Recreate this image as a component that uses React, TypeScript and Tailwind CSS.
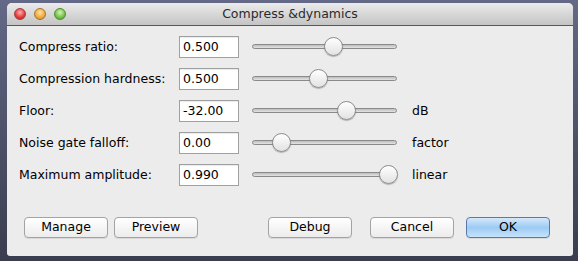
import React from "react";

const rows = [
  { label: "Compress ratio:", value: "0.500", pos: 333, unit: "" },
  { label: "Compression hardness:", value: "0.500", pos: 318, unit: "" },
  { label: "Floor:", value: "-32.00", pos: 346, unit: "dB" },
  { label: "Noise gate falloff:", value: "0.00", pos: 281, unit: "factor" },
  { label: "Maximum amplitude:", value: "0.990", pos: 388, unit: "linear" },
];

function Slider({ pos }: { pos: number }) {
  const left = pos - 252 - 9;
  return (
    <div className="relative h-[22px] w-[145px]">
      <div className="absolute left-0 right-0 top-[8px] h-[5px] rounded-full border border-[#8a8a8a] bg-gradient-to-b from-[#bdbdbd] to-[#e4e4e4]" />
      <div
        className="absolute top-[1px] h-[19px] w-[19px] rounded-full border border-[#8c8c8c] bg-gradient-to-b from-white to-[#e2e2e2] shadow-[0_1px_1px_rgba(0,0,0,0.25)]"
        style={{ left }}
      />
    </div>
  );
}

function Btn({ children, primary, className = "" }: { children: React.ReactNode; primary?: boolean; className?: string }) {
  return (
    <div
      className={
        "flex h-[21px] w-[84px] items-center justify-center rounded-[4px] border text-[12.5px] text-black shadow-[0_1px_0_rgba(0,0,0,0.08)] " +
        (primary
          ? "border-[#5a79a8] bg-gradient-to-b from-[#d6e8fb] via-[#9ccbf4] to-[#c6e3fb]"
          : "border-[#a3a3a3] bg-gradient-to-b from-white to-[#ececec]") +
        " " +
        className
      }
    >
      {children}
    </div>
  );
}

export default function App() {
  return (
    <div
      className="h-[261px] w-[578px] bg-gradient-to-b from-[#636987] to-[#3a3d4e] pl-[7px] pt-[3px]"
      style={{ fontFamily: '"DejaVu Sans", "Liberation Sans", sans-serif' }}
    >
      <div className="flex h-[253px] w-[566px] flex-col overflow-hidden rounded-t-[5px] rounded-b-[3px] bg-[#ececec]">
        <div className="relative flex h-[23px] items-center justify-center border-b border-[#585858] bg-gradient-to-b from-[#ebebeb] to-[#c4c4c4]">
          <div className="absolute left-[7px] top-[5px] flex gap-[8px]">
            <span className="h-[12px] w-[12px] rounded-full border border-[#a43c3c] bg-[radial-gradient(circle_at_50%_35%,#ffb0b0,#e03a3a_60%,#b21f1f)]" />
            <span className="h-[12px] w-[12px] rounded-full border border-[#a6742a] bg-[radial-gradient(circle_at_50%_35%,#ffe3a6,#f0a93a_60%,#c4801c)]" />
            <span className="h-[12px] w-[12px] rounded-full border border-[#4f8a34] bg-[radial-gradient(circle_at_50%_35%,#d3f5b5,#75c245_60%,#4b9628)]" />
          </div>
          <span className="text-[12.5px] text-[#2a2a2a]">Compress &amp;dynamics</span>
        </div>
        <div className="flex flex-col gap-[10px] pl-[12px] pt-[10px]">
          {rows.map((r) => (
            <div key={r.label} className="flex h-[22px] items-center">
              <div className="w-[160px] text-[12.5px] text-black">{r.label}</div>
              <div className="flex h-[22px] w-[60px] items-center border border-[#a0a0a0] bg-white pl-[3px] text-[12.5px] text-black shadow-[inset_0_1px_0_rgba(0,0,0,0.08)]">
                {r.value}
              </div>
              <div className="ml-[13px]">
                <Slider pos={r.pos} />
              </div>
              <div className="ml-[15px] text-[12.5px] text-black">{r.unit}</div>
            </div>
          ))}
        </div>
        <div className="mt-[31px] flex pl-[17px]">
          <Btn>Manage</Btn>
          <Btn className="ml-[6px]">Preview</Btn>
          <Btn className="ml-[70px]">Debug</Btn>
          <Btn className="ml-[18px]">Cancel</Btn>
          <Btn primary className="ml-[12px]">OK</Btn>
        </div>
      </div>
    </div>
  );
}
